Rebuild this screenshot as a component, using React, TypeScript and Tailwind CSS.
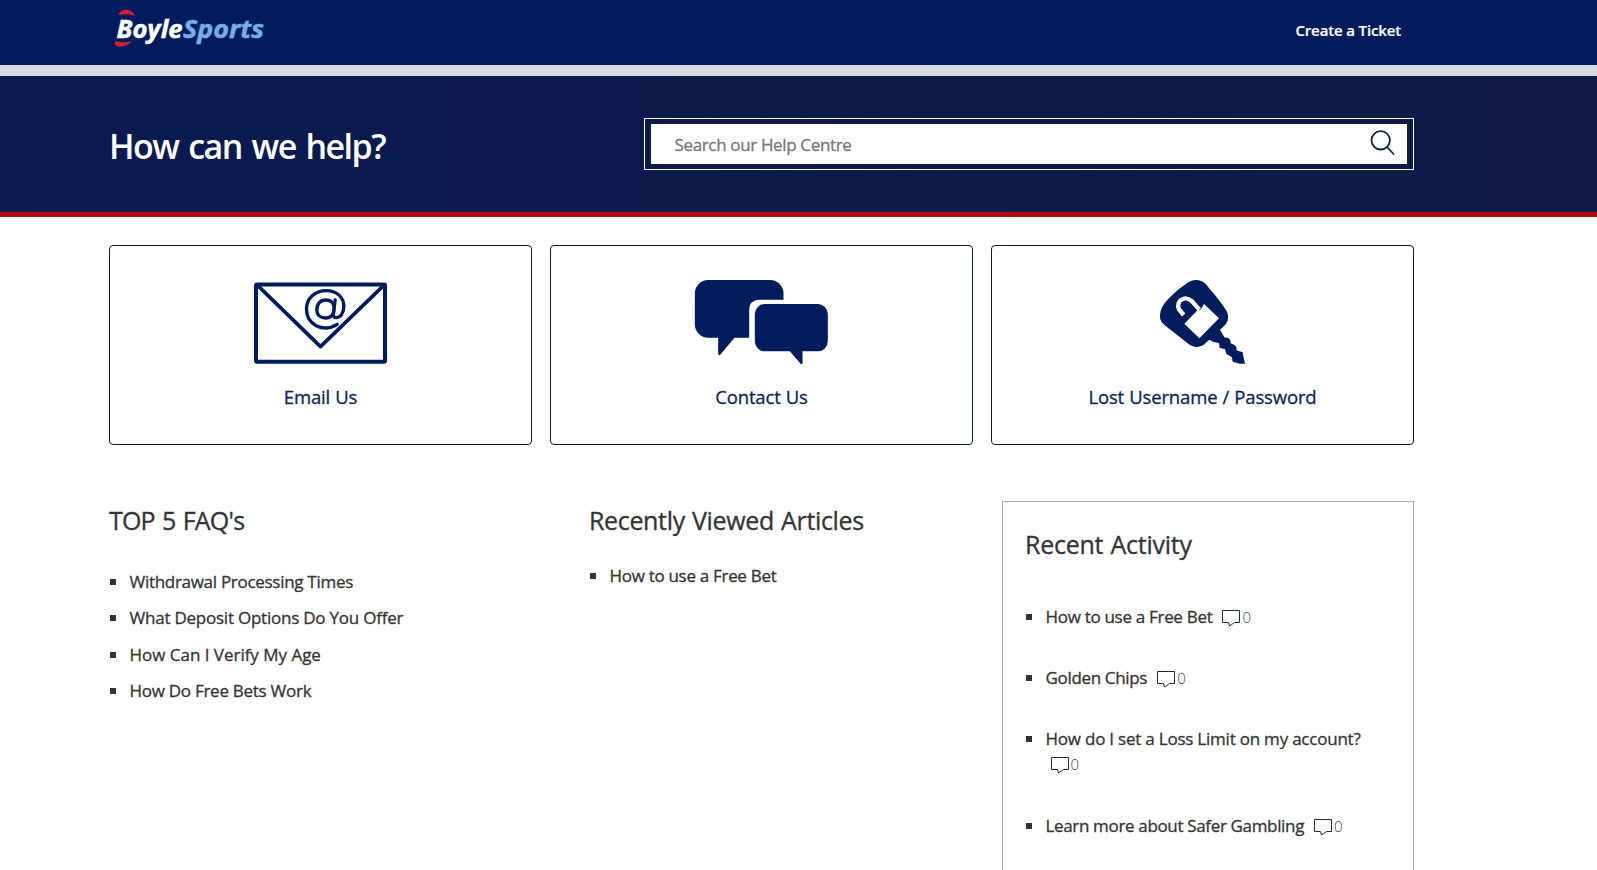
import type { ReactNode } from 'react';

function Logo() {
  return (
    <svg viewBox="0 0 160 44" className="block h-[44px] w-[160px]" role="img" aria-label="BoyleSports">
      <path d="M4.500 7C5.500 3.500 9 1.800 12 1.800C16 1.800 19 4 21 8C16.500 5.800 10 5.800 4.500 7Z" fill="#d81e34" />
      <path d="M1.200 33C-.3 37.500 3 39.200 7 38.700C12 38 15.500 36 18 33.300C13 34.800 6.500 34.500 1.200 33Z" fill="#d81e34" />
      <text x="2.500" y="29.500" fontSize="25" fontWeight="700" fontStyle="italic" fontFamily="Open Sans, sans-serif" fill="#ffffff" stroke="#ffffff" strokeWidth=".5" textLength="66" lengthAdjust="spacingAndGlyphs">Boyle</text>
      <text x="69" y="29.500" fontSize="25" fontWeight="700" fontStyle="italic" fontFamily="Open Sans, sans-serif" fill="#77aee6" stroke="#77aee6" strokeWidth=".5" textLength="81" lengthAdjust="spacingAndGlyphs">Sports</text>
    </svg>
  );
}

function EnvelopeIcon() {
  return (
    <svg viewBox="452.5 129 420 270" className="block h-[90px] w-[140px]" fill="none" stroke="#001c5c" strokeLinejoin="round" strokeLinecap="round">
      <rect x="467.500" y="148.500" width="387" height="232" rx="3" strokeWidth="12" />
      <path d="M473 152L661 335L850 152" strokeWidth="11" />
      <path d="M711 268C692 280 668 282 648 272C628 261 619 243 619 222C619 190 645 167 678 167C710 167 731 187 731 214C731 235 720 248 708 248C699 248 699 242 700 233L705 195" strokeWidth="10" />
      <path d="M702 221C702 237 692 249 677 249C661 249 650 240 650 224C650 207 661 195 677 195C693 195 702 205 702 221Z" strokeWidth="10" />
    </svg>
  );
}

function ChatIcon() {
  return (
    <svg viewBox="96.5 114 420 270" className="block h-[90px] w-[140px]" fill="#001c5c">
      <path d="M145 120H331A40 40 0 0 1 371 160V179H297Q268 181 268 210V293H224L181 344Q175 347 175 340V293H145A40 40 0 0 1 105 253V160A40 40 0 0 1 145 120Z" />
      <path d="M315 192H474A30 30 0 0 1 504 222V304A30 30 0 0 1 474 334H428V372H423L390 334H315A30 30 0 0 1 285 304V222A30 30 0 0 1 315 192Z" />
    </svg>
  );
}

function KeyIcon() {
  return (
    <svg viewBox="189 114 420 270" className="block h-[90px] w-[140px]">
      <path
        fill="#001c5c"
        d="M270 230C270 205 284 188 300 172C318 154 336 139 356 126C373 116 394 118 407 132C427 156 447 179 464 204C477 221 478 239 466 254L450 269L458 283L463 292L475 294L481 300L482 310L492 314L499 321L500 331L518 337L520 348L525 371L509 371L488 365L486 352L469 342L465 327L449 324L447 309L430 306L418 299L403 313C388 324 372 324 357 313L286 257C275 248 270 240 270 230Z"
      />
      <path d="M343 251L384 209L391 210L402 192L447 235L388 295Z" fill="#fff" />
      <path d="M388 209L366 184C344 164 316 183 327 208L341 225" fill="none" stroke="#fff" strokeWidth="13" />
    </svg>
  );
}

function SearchIcon() {
  return (
    <svg viewBox="0 0 26 26" className="block size-[26px]" fill="none" stroke="#16233a" strokeWidth="1.800">
      <circle cx="10.700" cy="10.300" r="9.200" />
      <path d="M17 17L24 24.500" />
    </svg>
  );
}

function Comments() {
  return (
    <span className="mt-[1px] ml-[10px] inline-flex items-center gap-[2px] align-top">
      <svg viewBox="0 0 18 18" className="block h-[18px] w-[18px]" fill="none" stroke="#1c2a4a" strokeWidth="1">
        <path d="M.5 1.500H17.500V13.500H12.500L7.500 17L6.500 13.500H.5Z" />
      </svg>
      <span className="text-[15px] font-light text-[#444] [-webkit-text-stroke:0]">0</span>
    </span>
  );
}

function Card({ icon, children }: { icon: ReactNode; children: ReactNode }) {
  return (
    <a className="flex h-[200px] flex-1 flex-col items-center rounded-[4px] border border-[#0b1840] pt-[32px] text-[18.5px] leading-[28px] tracking-[-0.15px] text-[#0b1f55] [word-spacing:0.5px]">
      {icon}
      <span className="mt-[15px] whitespace-nowrap">{children}</span>
    </a>
  );
}

function Bullet({ className }: { className: string }) {
  return <span className={`mr-[13.5px] ml-[1px] size-[6px] shrink-0 bg-[#333] ${className}`} />;
}

const faqs = [
  { text: 'Withdrawal Processing Times', style: 'tracking-[-0.29px]' },
  { text: 'What Deposit Options Do You Offer', style: 'tracking-[-0.23px]' },
  { text: 'How Can I Verify My Age', style: 'tracking-[-0.02px]' },
  { text: 'How Do Free Bets Work', style: 'tracking-[-0.27px]' },
];

const activity = [
  { text: 'How to use a Free Bet', style: 'tracking-[-0.3px]' },
  { text: 'Golden Chips', style: 'tracking-[-0.33px]' },
  { text: 'How do I set a Loss Limit on my account?', style: 'tracking-[-0.22px]', wrap: true },
  { text: 'Learn more about Safer Gambling', style: 'tracking-[-0.34px]' },
];

export default function App() {
  return (
    <div className="h-screen overflow-hidden bg-white font-['Open_Sans',sans-serif] font-medium text-[#333] [-webkit-text-stroke:0.3px]">
      <header className="flex h-[65px] justify-between bg-[#001c5c] pr-[196px] pl-[114px]">
        <div className="pt-[8px] [-webkit-text-stroke:0]">
          <Logo />
        </div>
        <a className="pt-[19px] text-[15px] leading-[22px] font-semibold tracking-[-0.14px] text-white [-webkit-text-stroke:0.2px]">Create a Ticket</a>
      </header>
      <div className="h-[11px] bg-[#d8dade]" />
      <section className="flex h-[141px] justify-between border-b-[5px] border-[#b0060f] bg-linear-to-r from-[#0a1a50] to-[#101b48] pr-[183px] pl-[109px]">
        <h1 className="pt-[45px] text-[34px] leading-[50px] font-semibold tracking-[-1.55px] text-white [-webkit-text-stroke:0] [word-spacing:2.5px]">How can we help?</h1>
        <div className="mt-[42px] h-[52px] w-[770px] border border-white p-[6px] pt-[5px]">
          <div className="flex h-[40px] justify-between bg-white pr-[11px] pl-[23.5px]">
            <span className="text-[17px] leading-[42px] tracking-[-0.35px] text-[#767676]">Search our Help Centre</span>
            <div className="pt-[6px]">
              <SearchIcon />
            </div>
          </div>
        </div>
      </section>
      <main className="w-[1414px] pt-[28px] pl-[109px]">
        <div className="flex gap-[18px]">
          <Card icon={<EnvelopeIcon />}>Email Us</Card>
          <Card icon={<ChatIcon />}>Contact Us</Card>
          <Card icon={<KeyIcon />}>Lost Username / Password</Card>
        </div>
        <div className="flex pt-[56px]">
          <section className="w-[480px] pt-[2px]">
            <h2 className="text-[25px] leading-[34px] tracking-[-0.8px] [word-spacing:1.5px]">TOP 5 FAQ's</h2>
            <ul className="pt-[27px] text-[17px] leading-[36.3px]">
              {faqs.map((f) => (
                <li key={f.text} className="flex whitespace-nowrap">
                  <Bullet className="mt-[15px]" />
                  <span className={f.style}>{f.text}</span>
                </li>
              ))}
            </ul>
          </section>
          <section className="w-[413px] pt-[2px]">
            <h2 className="text-[25px] leading-[34px] tracking-[-0.34px] [word-spacing:1px]">Recently Viewed Articles</h2>
            <ul className="pt-[21px] text-[17px] leading-[36.3px]">
              <li className="flex whitespace-nowrap">
                <Bullet className="mt-[15px]" />
                <span className="tracking-[-0.3px]">How to use a Free Bet</span>
              </li>
            </ul>
          </section>
          <section className="h-[420px] w-[412px] border border-[#a9abad] pt-[25px] pl-[22px]">
            <h2 className="text-[25px] leading-[34px] tracking-[-0.25px] [word-spacing:1px]">Recent Activity</h2>
            <ul className="flex flex-col gap-[36px] pt-[43px] text-[17px] leading-[25px]">
              {activity.map((a) => (
                <li key={a.text} className={`flex whitespace-nowrap ${a.wrap ? 'h-[51px]' : 'h-[25px]'}`}>
                  <Bullet className="mt-[10px]" />
                  <div>
                    <span className={a.style}>{a.text}</span>
                    {a.wrap ? (
                      <div className="-ml-[5px]">
                        <Comments />
                      </div>
                    ) : (
                      <Comments />
                    )}
                  </div>
                </li>
              ))}
            </ul>
          </section>
        </div>
      </main>
    </div>
  );
}
